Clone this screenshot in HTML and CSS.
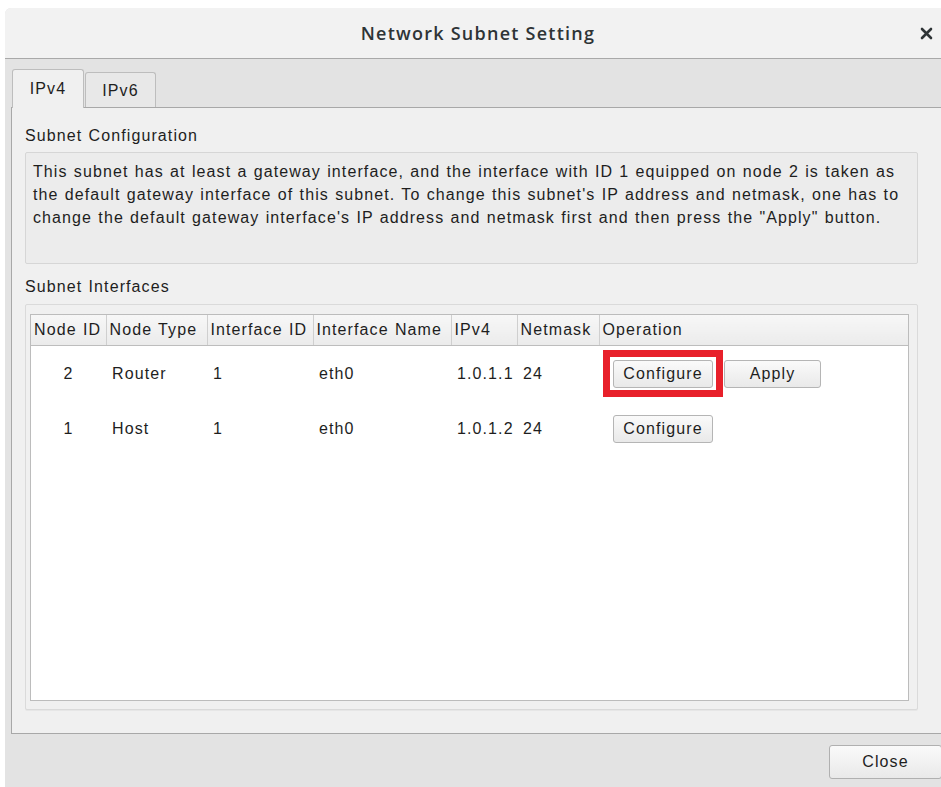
FILE: index.html
```html
<!DOCTYPE html>
<html lang="en">
<head>
<meta charset="utf-8">
<title>Network Subnet Setting</title>
<link rel="stylesheet" href="styles.css">
</head>
<body>
<div class="window">
  <header class="titlebar">
    <span class="title">Network Subnet Setting</span>
    <button class="close-x" aria-label="Close">
      <svg width="13" height="13" viewBox="0 0 13 13"><path d="M2 2 L11 11 M11 2 L2 11" stroke="#2e3436" stroke-width="2.6" stroke-linecap="round"/></svg>
    </button>
  </header>

  <div class="tabbar">
    <div class="tab active">IPv4</div>
    <div class="tab">IPv6</div>
  </div>

  <section class="panel">
    <div class="label">Subnet Configuration</div>
    <div class="infobox">This subnet has at least a gateway interface, and the interface with ID 1 equipped on node 2 is taken as the default gateway interface of this subnet. To change this subnet's IP address and netmask, one has to change the default gateway interface's IP address and netmask first and then press the "Apply" button.</div>

    <div class="label second">Subnet Interfaces</div>
    <div class="groupbox">
      <div class="tablewrap">
        <table class="grid">
          <colgroup>
            <col class="c1"><col class="c2"><col class="c3"><col class="c4"><col class="c5"><col class="c6"><col class="c7">
          </colgroup>
          <thead>
            <tr>
              <th>Node ID</th><th>Node Type</th><th>Interface ID</th><th>Interface Name</th><th>IPv4</th><th>Netmask</th><th class="last">Operation</th>
            </tr>
          </thead>
          <tbody>
            <tr>
              <td class="center">2</td><td>Router</td><td>1</td><td>eth0</td><td>1.0.1.1</td><td>24</td>
              <td class="ops">
                <div class="op-buttons">
                  <span class="highlighted">
                    <button class="btn configure">Configure</button>
                    <span class="mark"></span>
                  </span>
                  <button class="btn apply">Apply</button>
                </div>
              </td>
            </tr>
            <tr>
              <td class="center">1</td><td>Host</td><td>1</td><td>eth0</td><td>1.0.1.2</td><td>24</td>
              <td class="ops">
                <div class="op-buttons">
                  <button class="btn configure">Configure</button>
                </div>
              </td>
            </tr>
            <tr class="filler"><td colspan="7"></td></tr>
          </tbody>
        </table>
      </div>
    </div>
  </section>

  <footer class="footer">
    <button class="btn close">Close</button>
  </footer>
</div>
</body>
</html>
```

FILE: styles.css
```css
html, body {
  margin: 0;
  padding: 0;
  background: #ffffff;
  overflow: hidden;
}

body {
  width: 941px;
  height: 787px;
  font-family: "Liberation Sans", Arial, sans-serif;
  font-size: 16px;
  letter-spacing: 1.1px;
  word-spacing: 0.7px;
  color: #1e1e1e;
}

.window {
  margin: 8px 0 0 5px;
  width: 946px;
  height: 779px;
  background: #e3e3e3;
  border-top-left-radius: 6px;
  overflow: hidden;
  display: flex;
  flex-direction: column;
}

/* title bar */
.titlebar {
  position: relative;
  height: 50px;
  flex: none;
  background: #f2f2f2;
  border-bottom: 1px solid #a9a9a9;
  display: flex;
  align-items: center;
  justify-content: center;
}

.title {
  font-family: "Open Sans", sans-serif;
  font-weight: 600;
  font-size: 18px;
  color: #2e3436;
  letter-spacing: 1.25px;
  word-spacing: 0;
}

.close-x {
  position: absolute;
  right: 18px;
  top: 19px;
  width: 13px;
  height: 13px;
  padding: 0;
  border: 0;
  background: none;
  display: flex;
}

/* tabs */
.tabbar {
  height: 48px;
  flex: none;
  display: flex;
  align-items: flex-end;
  padding-left: 7px;
  position: relative;
  z-index: 1;
}

.tab {
  box-sizing: border-box;
  height: 35px;
  padding: 2px 0 0;
  display: flex;
  align-items: center;
  justify-content: center;
  background: #e8e8e8;
  border: 1px solid #bdbdbd;
  border-bottom: 0;
  border-radius: 3px 3px 0 0;
  color: #1e1e1e;
  margin-right: 1px;
  width: 71px;
}

.tab.active {
  height: 39px;
  width: 72px;
  background: #f0f0f0;
  margin-bottom: -1px;
  padding: 0 0 1px;
}

/* tab page */
.panel {
  box-sizing: border-box;
  margin-left: 6px;
  height: 627px;
  flex: none;
  background: #f0f0f0;
  border: 1px solid #a8a8a8;
  border-right: 0;
  padding: 19px 0 0 13px;
}

.label {
  line-height: 18px;
  height: 18px;
  color: #1e1e1e;
}

.label.second {
  margin-top: 14px;
}

.infobox {
  box-sizing: border-box;
  margin-top: 7px;
  width: 893px;
  height: 112px;
  background: #ececec;
  border: 1px solid #d6d6d6;
  border-radius: 2px;
  padding: 7px 7px;
  line-height: 23px;
  color: #1e1e1e;
}

.groupbox {
  box-sizing: border-box;
  margin-top: 8px;
  width: 893px;
  height: 406px;
  background: #f0f0f0;
  border: 1px solid #dadada;
  border-radius: 2px;
  box-shadow: 0 1px 0 #e6e6e6;
  padding: 9px 8px 8px 4px;
}

.tablewrap {
  box-sizing: border-box;
  height: 100%;
  background: #ffffff;
  border: 1px solid #bcbcbc;
  overflow: hidden;
}

.grid {
  width: 100%;
  height: 100%;
  border-collapse: collapse;
  table-layout: fixed;
}

.c1 { width: 75px; }
.c2 { width: 101px; }
.c3 { width: 106px; }
.c4 { width: 138px; }
.c5 { width: 66px; }
.c6 { width: 82px; }
.c7 { width: auto; }

.grid th {
  height: 30px;
  padding: 0 0 0 3px;
  text-align: left;
  font-weight: normal;
  white-space: nowrap;
  overflow: hidden;
  background: linear-gradient(#f7f7f7, #ebebeb);
  border-right: 1px solid #cfcfcf;
  border-bottom: 1px solid #bdbdbd;
  color: #1e1e1e;
}

.grid th.last {
  border-right: 0;
}

.grid td {
  height: 55px;
  padding: 0 0 0 6px;
  white-space: nowrap;
  color: #1e1e1e;
}

.grid td.center {
  text-align: center;
  padding: 0;
}

.grid tr.filler td {
  height: auto;
}

.grid td.ops {
  padding-left: 14px;
}

.op-buttons {
  display: flex;
  align-items: center;
  gap: 11px;
}

.highlighted {
  position: relative;
  display: flex;
}

/* red marker drawn around the first Configure button */
.mark {
  position: absolute;
  left: -10px;
  top: -10px;
  width: 120px;
  height: 47px;
  box-sizing: border-box;
  border: 7px solid #e8202a;
  pointer-events: none;
}

.btn {
  box-sizing: border-box;
  height: 28px;
  font-family: "Liberation Sans", Arial, sans-serif;
  font-size: 16px;
  letter-spacing: 1.1px;
  color: #1e1e1e;
  background: linear-gradient(#fafafa, #e9e9e9);
  border: 1px solid #b5b5b5;
  border-radius: 3px;
  padding: 0;
}

.btn.configure {
  width: 100px;
}

.btn.apply {
  width: 97px;
}

/* bottom button row */
.footer {
  flex: 1;
  display: flex;
  justify-content: flex-end;
  padding: 11px 9px 0 0;
}

.btn.close {
  width: 113px;
  height: 34px;
  border-color: #b0b0b0;
}
```
